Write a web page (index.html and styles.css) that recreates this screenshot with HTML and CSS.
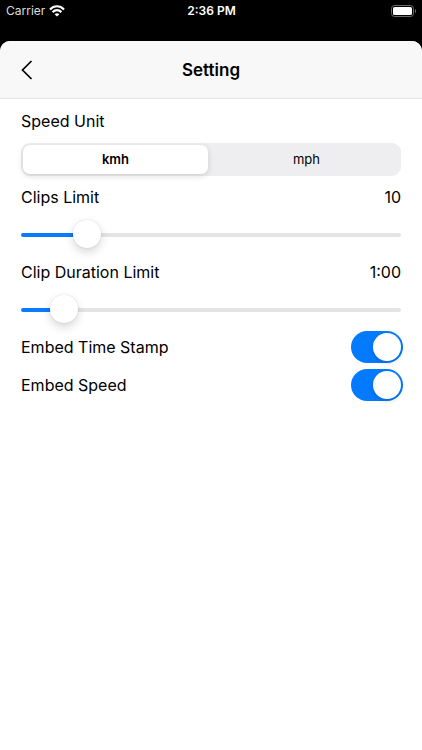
FILE: index.html
```html
<!DOCTYPE html>
<html lang="en">
<head>
  <meta charset="UTF-8" />
  <meta name="viewport" content="width=device-width, initial-scale=1.0"/>
  <title>Setting</title>
  <link rel="stylesheet" href="styles.css">
</head>
<body>
  <!-- Status Bar -->
  <div class="status-bar">
    <div class="status-left">
      <span>Carrier</span>
      <svg class="wifi" viewBox="0 0 16 12" width="16" height="12" aria-hidden="true">
        <g fill="none" stroke="#fff" stroke-width="2.2">
          <path d="M1 4.4C5 0.2 11 0.2 15 4.4"/>
          <path d="M3.6 7.1C6.2 4.5 9.8 4.5 12.4 7.1"/>
        </g>
        <path d="M8 11.6L5.6 9.2C7 7.9 9 7.9 10.4 9.2Z" fill="#fff"/>
      </svg>
    </div>
    <span class="status-time">2:36 PM</span>
    <div class="status-right">
      <svg viewBox="0 0 26 12" width="26" height="12" aria-hidden="true">
        <rect x="0.5" y="0.5" width="22" height="11" rx="3" fill="none" stroke="#6b6b6b"/>
        <rect x="2" y="2" width="19" height="8" rx="1.6" fill="#fff"/>
        <path d="M24 4C25.4 4.6 25.4 7.4 24 8Z" fill="#777"/>
      </svg>
    </div>
  </div>

  <!-- Settings Sheet -->
  <div class="sheet">
    <header>
      <button class="back" type="button" aria-label="Back">
        <svg viewBox="0 0 12 20" width="12" height="20" aria-hidden="true">
          <path d="M10.5 1L1.5 10L10.5 19" fill="none" stroke="#000" stroke-width="1.7"/>
        </svg>
      </button>
      <h1>Setting</h1>
    </header>

    <main class="settings">
      <div class="row" id="unit-label">Speed Unit</div>
      <div class="segmented" role="radiogroup" aria-labelledby="unit-label">
        <label class="segment"><input type="radio" name="unit" value="kmh" checked><span>kmh</span></label>
        <label class="segment"><input type="radio" name="unit" value="mph"><span>mph</span></label>
      </div>

      <div class="row">
        <label for="clips">Clips Limit</label>
        <output id="clips-value" for="clips">10</output>
      </div>
      <input class="slider" id="clips" type="range" min="1" max="62" value="10">

      <div class="row">
        <label for="duration">Clip Duration Limit</label>
        <output id="duration-value" for="duration">1:00</output>
      </div>
      <input class="slider" id="duration" type="range" min="10" max="620" step="5" value="60">

      <div class="toggles">
        <div class="row">
          <label for="time-stamp">Embed Time Stamp</label>
          <input class="switch" id="time-stamp" type="checkbox" role="switch" checked>
        </div>
        <div class="row">
          <label for="speed">Embed Speed</label>
          <input class="switch" id="speed" type="checkbox" role="switch" checked>
        </div>
      </div>
    </main>
  </div>

  <script>
    const clips = document.getElementById('clips');
    const duration = document.getElementById('duration');

    // Colour the track up to the thumb
    function paintTrack(slider) {
      const part = (slider.value - slider.min) / (slider.max - slider.min);
      slider.style.setProperty('--fill', part * 100 + '%');
    }

    function update() {
      const seconds = String(duration.value % 60).padStart(2, '0');
      document.getElementById('clips-value').textContent = clips.value;
      document.getElementById('duration-value').textContent = Math.floor(duration.value / 60) + ':' + seconds;
      paintTrack(clips);
      paintTrack(duration);
    }

    clips.addEventListener('input', update);
    duration.addEventListener('input', update);
    update();
  </script>
</body>
</html>
```
FILE: styles.css
```css
* {
  box-sizing: border-box;
}

body {
  margin: 0;
  min-height: 100vh;
  display: flex;
  flex-direction: column;
  background-color: #000;
  color: #000;
  font-family: Inter, 'Liberation Sans', sans-serif;
  font-size: 16px;
  line-height: 20px;
}

/* Status Bar */
.status-bar {
  display: grid;
  grid-template-columns: 1fr auto 1fr;
  align-items: center;
  height: 22px;
  margin-bottom: 19px;
  padding: 0 5px 0 6px;
  color: #fff;
  font-size: 12px;
}

.status-left {
  display: flex;
  align-items: center;
  gap: 4px;
  color: #ddd;
}

.status-time {
  font-weight: 600;
}

.status-right {
  display: flex;
  justify-content: flex-end;
}

/* Sheet */
.sheet {
  flex: 1;
  background-color: #fff;
  border-radius: 10px 10px 0 0;
  overflow: hidden;
}

header {
  display: grid;
  grid-template-columns: 1fr auto 1fr;
  align-items: center;
  height: 58px;
  padding: 0 21px;
  background-color: #f8f8f8;
  border-bottom: 1px solid #e3e3e3;
}

header h1 {
  margin: 0;
  font-size: 17px;
  font-weight: 600;
}

.back {
  display: flex;
  justify-self: start;
  padding: 0;
  border: 0;
  background: none;
}

.settings {
  padding: 12px 21px;
}

.row {
  display: flex;
  justify-content: space-between;
  align-items: center;
}

/* Segmented Control */
.segmented {
  display: flex;
  gap: 6px;
  height: 33px;
  margin: 12px 0 11px;
  padding: 2px;
  background-color: #eeeef0;
  border-radius: 9px;
}

.segment {
  flex: 1;
  display: flex;
}

.segment input {
  appearance: none;
  width: 0;
  margin: 0;
}

.segment span {
  flex: 1;
  border-radius: 7px;
  font-size: 13px;
  line-height: 29px;
  text-align: center;
}

.segment input:checked + span {
  background-color: #fff;
  font-weight: 600;
  box-shadow: 0 2px 6px rgba(0, 0, 0, 0.14);
}

/* Sliders */
.slider {
  appearance: none;
  display: block;
  width: 100%;
  height: 28px;
  margin: 14px 0 13px;
  background: none;
}

.slider::-webkit-slider-runnable-track {
  height: 4px;
  border-radius: 2px;
  background: linear-gradient(90deg, #0a7aff var(--fill), #e4e4e6 var(--fill));
}

.slider::-webkit-slider-thumb {
  appearance: none;
  width: 28px;
  height: 28px;
  margin-top: -13px;
  border-radius: 50%;
  background-color: #fff;
  box-shadow: 0 4px 10px rgba(0, 0, 0, 0.16), 0 0 2px rgba(0, 0, 0, 0.12);
}

/* Switches */
.toggles {
  display: grid;
  gap: 6px;
  margin-top: 7px;
}

.slider:has(+ .toggles) {
  margin-bottom: 0;
}

.switch {
  appearance: none;
  width: 52px;
  height: 32px;
  margin: 0 -2px 0 0;
  padding: 2px;
  border-radius: 16px;
  background-color: #e4e4e6;
}

.switch::before {
  content: '';
  display: block;
  width: 28px;
  height: 28px;
  border-radius: 50%;
  background-color: #fff;
  box-shadow: 0 2px 5px rgba(0, 0, 0, 0.15);
}

.switch:checked {
  background-color: #047aff;
}

.switch:checked::before {
  margin-left: auto;
}
```
